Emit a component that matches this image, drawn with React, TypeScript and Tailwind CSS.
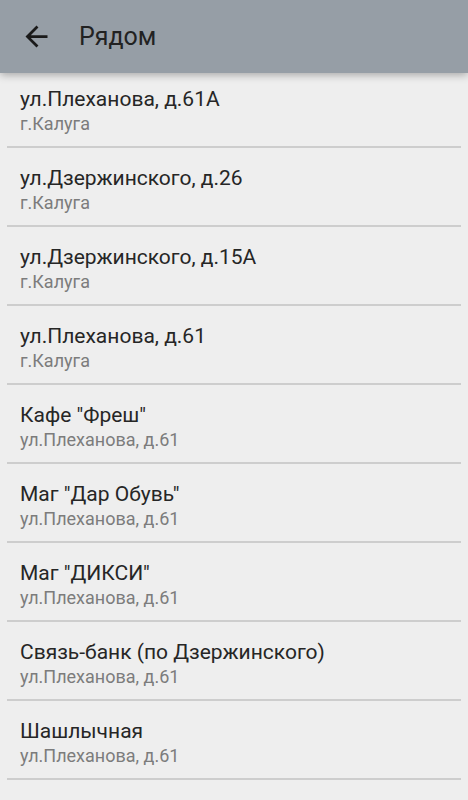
import React from "react";

const items: [string, string][] = [
  ["ул.Плеханова, д.61А", "г.Калуга"],
  ["ул.Дзержинского, д.26", "г.Калуга"],
  ["ул.Дзержинского, д.15А", "г.Калуга"],
  ["ул.Плеханова, д.61", "г.Калуга"],
  ["Кафе \"Фреш\"", "ул.Плеханова, д.61"],
  ["Маг \"Дар Обувь\"", "ул.Плеханова, д.61"],
  ["Маг \"ДИКСИ\"", "ул.Плеханова, д.61"],
  ["Связь-банк (по Дзержинского)", "ул.Плеханова, д.61"],
  ["Шашлычная", "ул.Плеханова, д.61"],
];

export default function App() {
  return (
    <div
      className="w-[468px] h-[800px] overflow-hidden bg-[#eeeeee] flex flex-col"
      style={{ fontFamily: "Roboto, 'Noto Sans', sans-serif" }}
    >
      <header className="relative z-10 h-[73px] shrink-0 bg-[#969ea6] flex items-center shadow-[0_2px_8px_rgba(0,0,0,0.3)]">
        <div className="w-[79px] flex items-center pl-[20px]">
          <svg width="33" height="33" viewBox="0 0 24 24" fill="#1a1a1a">
            <path d="M20 11H7.83l5.59-5.59L12 4l-8 8 8 8 1.41-1.41L7.83 13H20v-2z" />
          </svg>
        </div>
        <span className="text-[25px] text-[#222222] leading-none">Рядом</span>
      </header>
      <div className="-mt-[4px] flex flex-col">
        {items.map(([t, s], i) => (
          <div key={i} className="h-[79px] shrink-0 flex flex-col">
            <div className="flex-1 flex flex-col pl-[20px] pt-[17px]">
              <span className="text-[21px] leading-[26px] text-[#262626]">{t}</span>
              <span className="text-[18px] leading-[24px] text-[#7c7c7c]">{s}</span>
            </div>
            <div className="mx-[7px] h-[2px] bg-[#cdcdcd]" />
          </div>
        ))}
      </div>
    </div>
  );
}
